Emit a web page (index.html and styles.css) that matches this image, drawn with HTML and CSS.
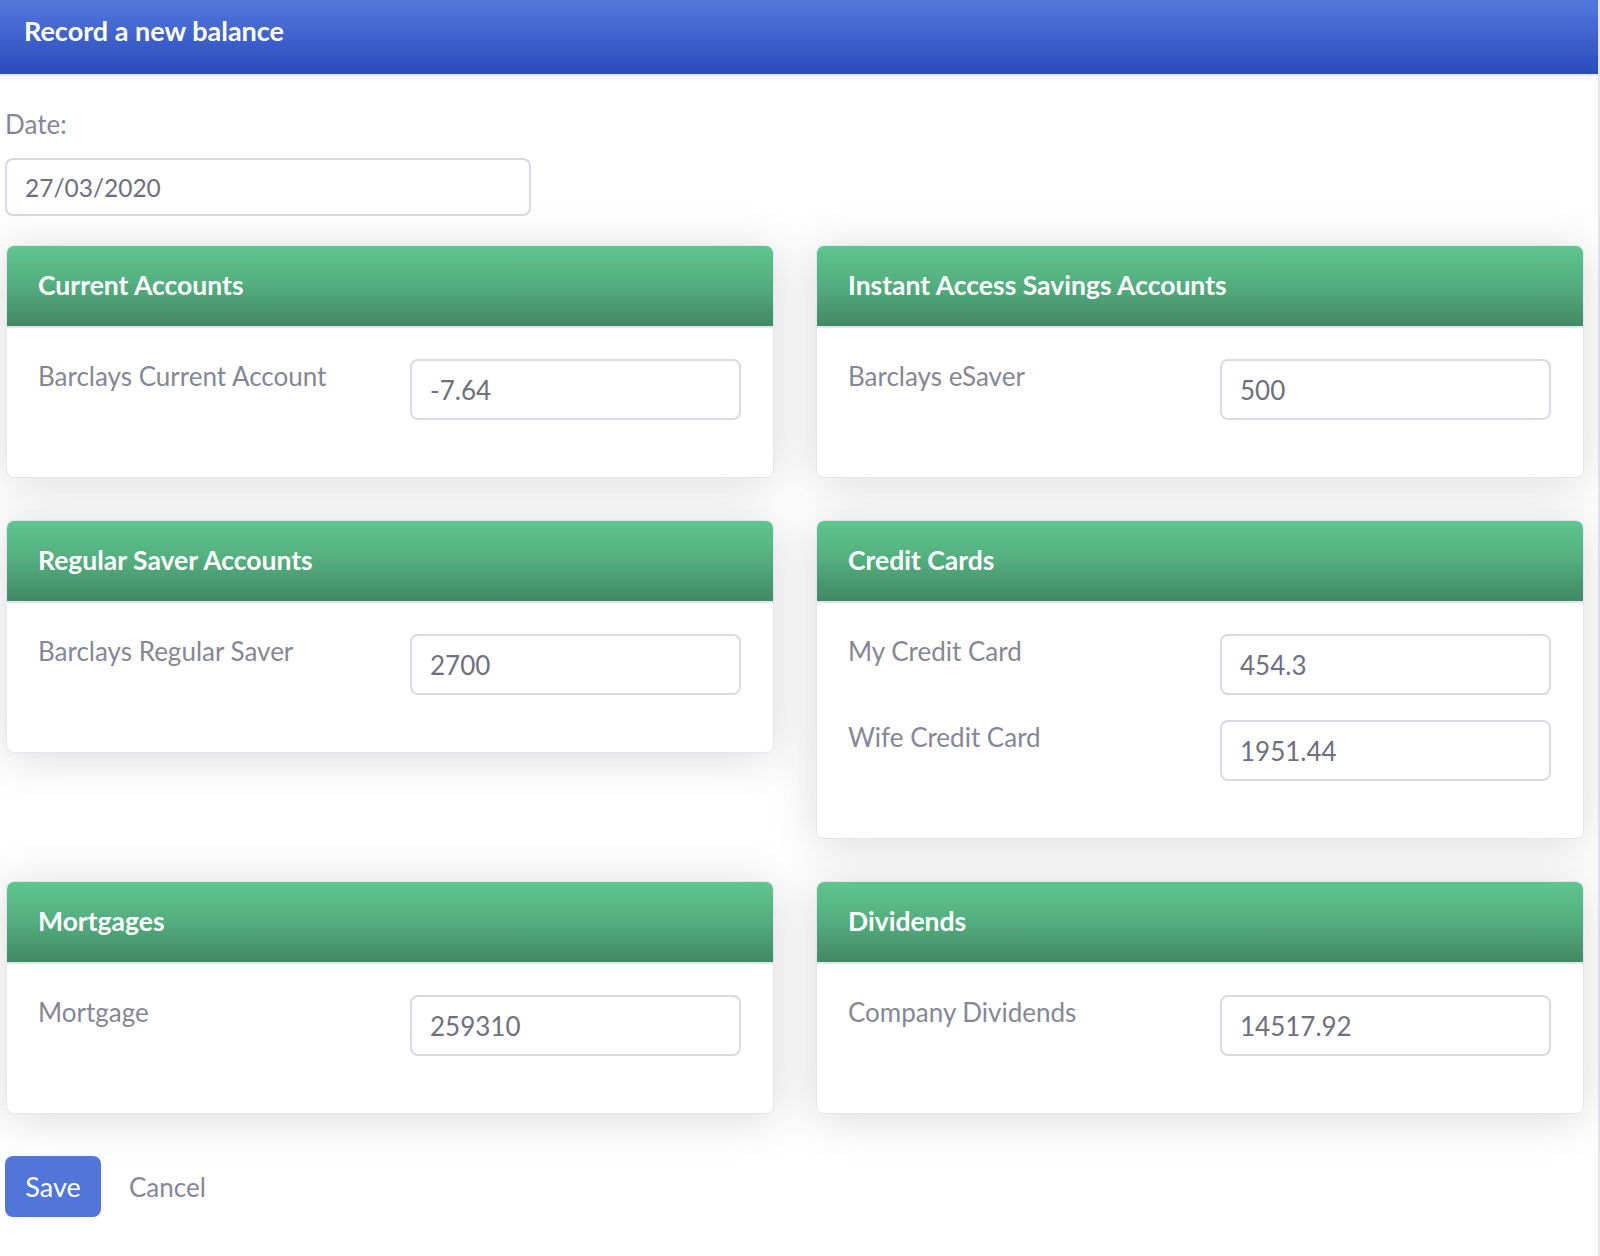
FILE: index.html
```html
<!DOCTYPE html>
<html lang="en">
<head>
<meta charset="utf-8">
<title>Record a new balance</title>
<link rel="stylesheet" href="styles.css">
</head>
<body>
<div class="page">
  <div class="modal-header">
    <h5 class="modal-title">Record a new balance</h5>
  </div>
  <div class="modal-body">
    <label class="date-label">Date:</label>
    <input class="form-control date-input" type="text" value="27/03/2020">

    <div class="cards">
      <div class="card">
        <div class="card-header">Current Accounts</div>
        <div class="card-body">
          <div class="form-row"><label>Barclays Current Account</label><input class="form-control" type="text" value="-7.64"></div>
        </div>
      </div>
      <div class="card">
        <div class="card-header">Instant Access Savings Accounts</div>
        <div class="card-body">
          <div class="form-row"><label>Barclays eSaver</label><input class="form-control" type="text" value="500"></div>
        </div>
      </div>
      <div class="card">
        <div class="card-header">Regular Saver Accounts</div>
        <div class="card-body">
          <div class="form-row"><label>Barclays Regular Saver</label><input class="form-control" type="text" value="2700"></div>
        </div>
      </div>
      <div class="card">
        <div class="card-header">Credit Cards</div>
        <div class="card-body">
          <div class="form-row"><label>My Credit Card</label><input class="form-control" type="text" value="454.3"></div>
          <div class="form-row"><label>Wife Credit Card</label><input class="form-control" type="text" value="1951.44"></div>
        </div>
      </div>
      <div class="card">
        <div class="card-header">Mortgages</div>
        <div class="card-body">
          <div class="form-row"><label>Mortgage</label><input class="form-control" type="text" value="259310"></div>
        </div>
      </div>
      <div class="card">
        <div class="card-header">Dividends</div>
        <div class="card-body">
          <div class="form-row"><label>Company Dividends</label><input class="form-control" type="text" value="14517.92"></div>
        </div>
      </div>
    </div>

    <div class="actions">
      <button class="btn-save" type="button">Save</button>
      <a class="btn-cancel" href="#">Cancel</a>
    </div>
  </div>
</div>
</body>
</html>
```
FILE: styles.css
```css
* { box-sizing: border-box; }
html, body { margin: 0; padding: 0; background: #fff; }
body {
  font-family: Lato, "Noto Sans", "Liberation Sans", sans-serif;
  font-size: 26px;
  color: #858796;
}
.page {
  width: 1600px;
  min-height: 1256px;
  border-right: 2px solid #e3e6f0;
}
.modal-header {
  height: 76px;
  padding-left: 24px;
  display: flex;
  align-items: center;
  padding-bottom: 14px;
  background: linear-gradient(180deg, #5278dc 0%, #3d5fcb 55%, #2a4cbb 100%);
  border-bottom: 2px solid #e3e6f0;
}
.modal-title {
  margin: 0;
  color: #fff;
  font-size: 27px;
  font-weight: 700;
}
.modal-body {
  padding: 32px 14px 0 5px;
}
.date-label {
  display: block;
  line-height: 32px;
  margin-bottom: 18px;
}
.form-control {
  display: block;
  height: 58px;
  padding: 0 18px;
  font-family: inherit;
  font-size: 26px;
  color: #6e707e;
  background: #fff;
  border: 2px solid #d8d9e5;
  border-radius: 8px;
  outline: none;
}
.date-input {
  width: 526px;
  font-size: 24.5px;
}
.cards {
  margin-top: 29px;
  margin-left: 1px;
  display: grid;
  grid-template-columns: 768px 768px;
  column-gap: 42px;
  row-gap: 42px;
  align-items: start;
}
.card {
  background: #fff;
  border: 1px solid #e3e6f0;
  border-radius: 8px;
  box-shadow: 0 4px 46px 0 rgba(58, 59, 69, 0.19);
  overflow: hidden;
}
.card-header {
  height: 82px;
  display: flex;
  align-items: center;
  padding: 0 32px 3px 31px;
  color: #fff;
  font-weight: 700;
  font-size: 26.5px;
  background: linear-gradient(180deg, #5ec68f 0%, #53ad7e 50%, #428864 100%);
  border-bottom: 2px solid #e3e6f0;
}
.card-body {
  padding: 31px 32px 32px 31px;
}
.form-row {
  display: grid;
  grid-template-columns: 1fr 331px;
  align-items: start;
  margin-bottom: 25px;
}
.form-row label {
  line-height: 32px;
  padding-top: 1px;
}
.form-row .form-control {
  width: 331px;
  height: 61px;
}
.actions {
  margin-top: 42px;
  display: flex;
  align-items: center;
  gap: 28px;
}
.btn-save {
  width: 96px;
  height: 61px;
  border: none;
  border-radius: 8px;
  background: #5275da;
  color: #fff;
  font-family: inherit;
  font-size: 27px;
}
.btn-cancel {
  color: #858796;
  text-decoration: none;
  font-size: 26px;
}
```
